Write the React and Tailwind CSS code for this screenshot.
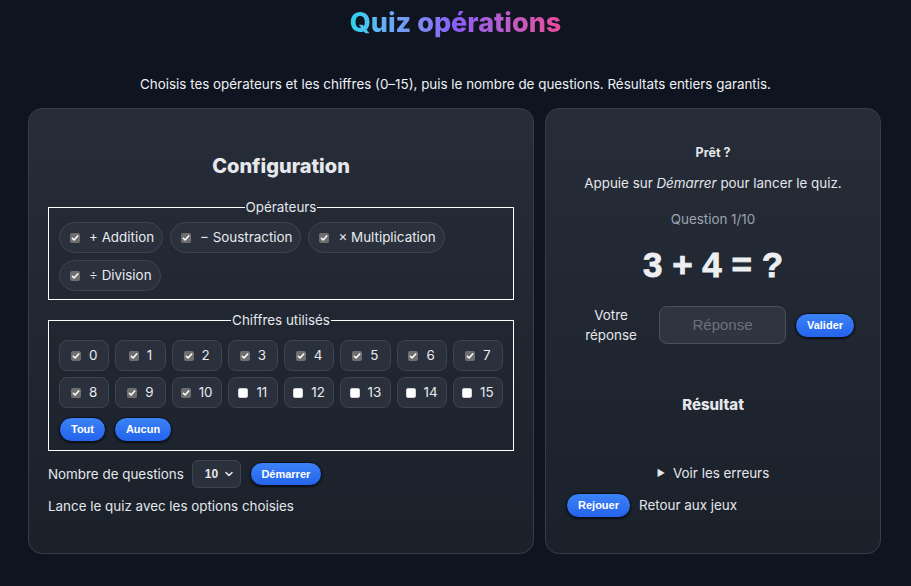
import React from "react";

const font = "font-['Inter','Noto_Sans',sans-serif]";
const arial = "font-['Liberation_Sans',Arial,sans-serif]";

function Box({ checked }) {
  return checked ? (
    <span className="flex h-[10px] w-[10px] shrink-0 items-center justify-center rounded-[2px] bg-[#6e6e6e]">
      <svg width="8" height="8" viewBox="0 0 8 8">
        <path d="M1.3 4.2 L3.1 6 L6.7 1.9" fill="none" stroke="#fff" strokeWidth="1.5" strokeLinecap="round" strokeLinejoin="round" />
      </svg>
    </span>
  ) : (
    <span className="h-[10px] w-[10px] shrink-0 rounded-[2px] border border-[#d4d4d4] bg-white" />
  );
}

function BlueBtn({ children, className = "" }) {
  return (
    <button
      className={`${arial} rounded-full border border-[#0a0f18] bg-gradient-to-b from-[#3b82f6] to-[#2563eb] text-[11px] font-bold text-white shadow-[0_1px_2px_rgba(0,0,0,0.7)] ${className}`}
    >
      {children}
    </button>
  );
}

const ops = ["+ Addition", "− Soustraction", "× Multiplication", "÷ Division"];
const digits = Array.from({ length: 16 }, (_, i) => i);

export default function App() {
  return (
    <div className={`min-h-screen bg-[#0e1520] text-[#e5e7eb] ${font}`}>
      <div className="flex justify-center pt-[6px]">
        <h1 className="bg-gradient-to-r from-[#22d3ee] via-[#8b5cf6] to-[#ec4899] bg-clip-text text-[27px] font-extrabold leading-[34px] text-transparent">
          Quiz opérations
        </h1>
      </div>
      <p className="mt-[34px] text-center text-[13.4px] leading-[20px] text-[#eef0f3]">
        Choisis tes opérateurs et les chiffres (0–15), puis le nombre de questions. Résultats entiers garantis.
      </p>

      <div className="mt-[14px] grid grid-cols-[506px_336px] gap-[11px] pl-[28px]">
        {/* Left card */}
        <div className="h-[446px] rounded-[14px] border border-[#363d48] bg-gradient-to-b from-[#262d38] to-[#1a212b] px-[19px]">
          <h2 className="mt-[43px] text-center text-[20px] font-extrabold leading-[28px] text-[#e6e8ec]">Configuration</h2>

          <fieldset className="mt-[17px] border border-white px-[10px] pb-[8px] pt-[5px]">
            <legend align="center" className="mx-auto px-[1px] text-[13.4px] leading-[20px] text-[#e5e7eb]">
              Opérateurs
            </legend>
            <div className="flex flex-wrap gap-x-[7px] gap-y-[7px]">
              {ops.map((o) => (
                <div
                  key={o}
                  className="flex h-[31px] items-center gap-[9px] rounded-full border border-[#3c4451] bg-[#2a313c] pl-[10px] pr-[8px] text-[13.4px] text-[#e8eaee]"
                >
                  <Box checked />
                  <span>{o}</span>
                </div>
              ))}
            </div>
          </fieldset>

          <fieldset className="mt-[10px] border border-white px-[10px] pb-[8px] pt-[10px]">
            <legend align="center" className="mx-auto px-[1px] text-[13.4px] leading-[20px] text-[#e5e7eb]">
              Chiffres utilisés
            </legend>
            <div className="grid grid-cols-8 gap-x-[6px] gap-y-[6px]">
              {digits.map((d) => (
                <div
                  key={d}
                  className="flex h-[31px] items-center justify-center gap-[8px] rounded-[8px] border border-[#3c4451] bg-[#2a313c] text-[13.4px] text-[#e8eaee]"
                >
                  <Box checked={d <= 10} />
                  <span>{d}</span>
                </div>
              ))}
            </div>
            <div className="mt-[9px] flex gap-[8px]">
              <BlueBtn className="h-[25px] w-[47px]">Tout</BlueBtn>
              <BlueBtn className="h-[25px] w-[58px]">Aucun</BlueBtn>
            </div>
          </fieldset>

          <div className="mt-[9px] flex items-center text-[13.4px]">
            <span>Nombre de questions</span>
            <div className="ml-[8px] flex h-[28px] w-[49px] items-center justify-between rounded-[6px] border border-[#3c4451] bg-[#2a313c] pl-[12px] pr-[6px]">
              <span className={`${arial} text-[12px] font-bold`}>10</span>
              <svg width="10" height="10" viewBox="0 0 10 10">
                <path d="M2 3.5 L5 6.5 L8 3.5" fill="none" stroke="#e5e7eb" strokeWidth="1.6" strokeLinecap="round" strokeLinejoin="round" />
              </svg>
            </div>
            <BlueBtn className="ml-[9px] h-[24px] w-[72px]">Démarrer</BlueBtn>
          </div>
          <p className="mt-[8px] text-[13.4px] leading-[20px]">Lance le quiz avec les options choisies</p>
        </div>

        {/* Right card */}
        <div className="flex h-[446px] flex-col items-center rounded-[14px] border border-[#363d48] bg-gradient-to-b from-[#262d38] to-[#1a212b]">
          <div className="mt-[35px] text-[12.5px] font-bold leading-[18px]">Prêt ?</div>
          <div className="mt-[11px] text-[13.4px] leading-[20px]">
            Appuie sur <em>Démarrer</em> pour lancer le quiz.
          </div>
          <div className="mt-[16px] text-[13.4px] leading-[20px] text-[#9ca3af]">Question 1/10</div>
          <div className={`${arial} mt-[16px] text-[35px] font-bold leading-[40px] text-[#eceef1] [-webkit-text-stroke:0.8px_#eceef1]`}>3 + 4 = ?</div>
          <div className="ml-[8px] mt-[20px] flex items-center">
            <div className="w-[64px] text-center text-[13.4px] leading-[20px]">
              Votre
              <br />
              réponse
            </div>
            <div className="ml-[16px] flex h-[38px] w-[127px] items-center justify-center rounded-[8px] border border-[#4a515c] bg-[#2e3540]">
              <span className={`${arial} text-[15px] text-[#6b717b]`}>Réponse</span>
            </div>
            <BlueBtn className="ml-[9px] h-[25px] w-[60px]">Valider</BlueBtn>
          </div>
          <div className="mt-[50px] text-[15px] font-extrabold leading-[20px]">Résultat</div>
          <div className="mt-[48px] flex items-center gap-[8px] text-[13.4px] leading-[20px]">
            <span className="text-[9px]">▶</span>
            <span>Voir les erreurs</span>
          </div>
          <div className="mt-[10px] flex items-center self-start pl-[20px]">
            <BlueBtn className="h-[25px] w-[65px]">Rejouer</BlueBtn>
            <span className="ml-[8px] text-[13.4px]">Retour aux jeux</span>
          </div>
        </div>
      </div>
    </div>
  );
}
